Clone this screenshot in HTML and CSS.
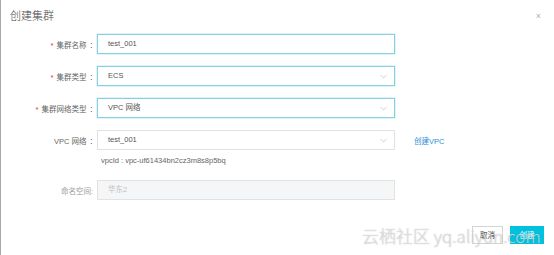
FILE: index.html
```
<!DOCTYPE html>
<html lang="zh-CN">
<head>
  <meta charset="UTF-8">
  <title>创建集群</title>
  <link rel="stylesheet" href="styles.css">
</head>
<body>
  <div class="dialog">
    <div class="dialog-head">
      <h1>创建集群</h1>
      <span class="close">×</span>
    </div>

    <div class="form">
      <div class="row">
        <label class="label"><i>*</i> 集群名称<span class="colon">：</span></label>
        <div class="field focus">test_001</div>
      </div>
      <div class="row">
        <label class="label"><i>*</i> 集群类型<span class="colon">：</span></label>
        <div class="field focus select">ECS
          <svg class="arrow" width="7" height="5" viewBox="0 0 7 5"><path d="M0.5 1 L3.5 4 L6.5 1" fill="none" stroke="#c4c4c4" stroke-width="0.8"/></svg>
        </div>
      </div>
      <div class="row">
        <label class="label"><i>*</i> 集群网络类型<span class="colon">：</span></label>
        <div class="field focus select">VPC 网络
          <svg class="arrow" width="7" height="5" viewBox="0 0 7 5"><path d="M0.5 1 L3.5 4 L6.5 1" fill="none" stroke="#c4c4c4" stroke-width="0.8"/></svg>
        </div>
      </div>
      <div class="row">
        <label class="label">VPC 网络<span class="colon">：</span></label>
        <div class="field select">test_001
          <svg class="arrow" width="7" height="5" viewBox="0 0 7 5"><path d="M0.5 1 L3.5 4 L6.5 1" fill="none" stroke="#c4c4c4" stroke-width="0.8"/></svg>
        </div>
        <a class="link">创建VPC</a>
      </div>
      <div class="hint">vpcId : vpc-uf61434bn2cz3m8s8p5bq</div>
      <div class="row">
        <label class="label muted">命名空间:</label>
        <div class="field disabled">华东2</div>
      </div>
    </div>

    <div class="footer">
      <button class="btn">取消</button>
      <button class="btn primary">创建</button>
    </div>

    <div class="watermark">云栖社区 yq.aliyun.com</div>
  </div>
</body>
</html>
```

FILE: styles.css
```
body {
  margin: 0;
  background: #fff;
  font-family: "Liberation Sans", "Noto Sans CJK SC", sans-serif;
  color: #555;
}

.dialog {
  position: relative;
  width: 553px;
  height: 255px;
  border-left: 1px solid #a8a8a8;
  overflow: hidden;
}

.dialog-head {
  padding: 9px 0 0 9px;
  height: 25px;
  box-sizing: border-box;
}

.dialog-head h1 {
  margin: 0;
  font-size: 11px;
  font-weight: 300;
  line-height: 14px;
  color: #444;
}

.close {
  position: absolute;
  top: 12px;
  right: 13px;
  font-size: 9px;
  line-height: 9px;
  color: #b0b0b0;
}

.form {
  padding-top: 9px;
}

.row {
  display: flex;
  align-items: center;
  height: 20px;
  margin-bottom: 12px;
  font-size: 7.5px;
}

.label {
  flex: 0 0 95px;
  text-align: right;
  color: #666;
  font-size: 7.5px;
}

.label i {
  font-style: normal;
  color: #e4393c;
  margin-right: 1px;
}

.label .colon {
  margin-left: 3px;
  margin-right: -1px;
}

.label.muted {
  color: #999;
  padding-right: 3px;
  box-sizing: border-box;
}

.field {
  position: relative;
  width: 298px;
  height: 20px;
  margin-left: 1px;
  box-sizing: border-box;
  border: 1px solid #e2e2e2;
  padding-left: 10px;
  line-height: 18px;
  color: #555;
  font-size: 7.5px;
}

.field.focus {
  border-color: #88d2de;
  box-shadow: 0 0 0 0.5px #bfe9f0;
}

.field.disabled {
  background: #f5f6f7;
  color: #c2c2c2;
}

.arrow {
  position: absolute;
  right: 7px;
  top: 7px;
}

.link {
  margin-left: 19px;
  color: #2d8fd8;
  font-size: 7.5px;
}

.hint {
  margin: -6px 0 14px 100px;
  height: 10px;
  line-height: 10px;
  font-size: 7.5px;
  color: #666;
}

.footer {
  position: absolute;
  right: 10px;
  bottom: 11px;
  display: flex;
  gap: 7px;
}

.btn {
  height: 18px;
  padding: 0 7px;
  border: 1px solid #d4d4d4;
  background: #fff;
  color: #333;
  font-family: "Noto Sans CJK SC", sans-serif;
  font-size: 7.5px;
  line-height: 16px;
}

.btn.primary {
  background: #00c1de;
  border-color: #00c1de;
  color: #fff;
  width: 34px;
}

.watermark {
  position: absolute;
  left: 361px;
  top: 224px;
  font-family: "Noto Sans CJK SC", sans-serif;
  font-weight: 300;
  font-size: 17px;
  line-height: 24px;
  white-space: nowrap;
  color: rgba(255, 255, 255, 0.6);
  text-shadow: 0 0 1px rgba(120, 120, 120, 0.7);
  pointer-events: none;
}
```
